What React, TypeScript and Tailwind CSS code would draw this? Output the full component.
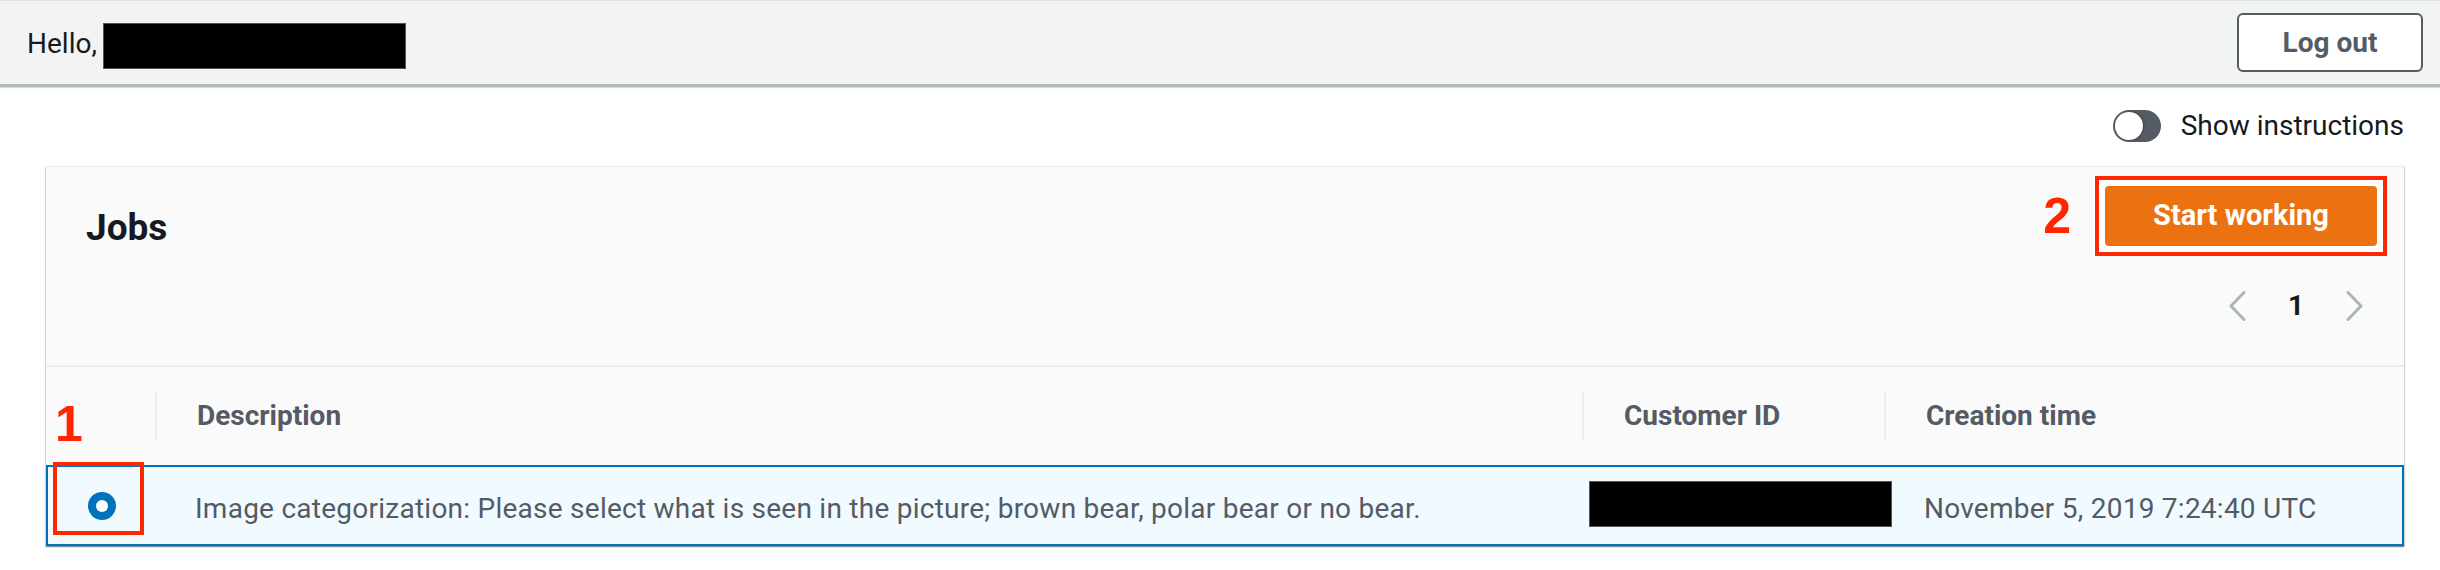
const font = { fontFamily: "Roboto, 'Open Sans', Arial, sans-serif" };
const annot = { fontFamily: "'Liberation Sans', Arial, sans-serif" };

function Toggle() {
  return (
    <div className="flex h-[32px] w-[48px] items-center rounded-full bg-[#545b64] pl-[2px]">
      <div className="h-[28px] w-[28px] rounded-full bg-white shadow-[1px_0_2px_rgba(0,0,0,0.35)]" />
    </div>
  );
}

function Radio() {
  return (
    <div className="flex h-[28px] w-[28px] items-center justify-center rounded-full bg-[#0073bb]">
      <div className="h-[12px] w-[12px] rounded-full bg-white" />
    </div>
  );
}

function Chevron({ dir }: { dir: "left" | "right" }) {
  return (
    <svg width="17" height="30" viewBox="0 0 17 30" fill="none" stroke="#aab7b8" strokeWidth="3" strokeLinecap="round" strokeLinejoin="round">
      <polyline points={dir === "left" ? "15,1.5 2,15 15,28.5" : "2,1.5 15,15 2,28.5"} />
    </svg>
  );
}

function HeadCell({ label }: { label: string }) {
  return (
    <div className="flex items-center">
      <div className="h-[48px] w-[2px] bg-[#eaeded]" />
      <span className="ml-[40px] text-[28px] font-bold text-[#545b64]">{label}</span>
    </div>
  );
}

export default function App() {
  return (
    <div className="min-h-[570px] w-full bg-white" style={font}>
      {/* top bar */}
      <header className="flex h-[87px] items-center justify-between border-t border-b-[3px] border-t-[#dfe2e2] border-b-[#b0babb] bg-[#f2f3f3] pl-[27px] pr-[17px] shadow-[0_1px_1px_rgba(0,28,36,0.15)]">
        <div className="flex items-center">
          <span className="mt-[3px] text-[28px] leading-[34px] text-[#16191f]">Hello,</span>
          <div className="ml-[6px] mt-[6px] h-[46px] w-[303px] border border-[#555] bg-black" />
        </div>
        <button className="h-[59px] w-[186px] rounded-[6px] border-2 border-[#545b64] bg-white text-[28px] font-bold text-[#545b64]">
          Log out
        </button>
      </header>

      <main className="pl-[46px] pr-[36px]">
        <div className="mt-[23px] flex h-[32px] items-center justify-end gap-[20px]">
          <Toggle />
          <span className="text-[28px] leading-[32px] text-[#16191f]">Show instructions</span>
        </div>

        <div className="mt-[24px] border-t border-[#eaeded] bg-[#fafafa] shadow-[0_1px_1px_0_rgba(0,28,36,0.3),1px_1px_1px_0_rgba(0,28,36,0.15),-1px_1px_1px_0_rgba(0,28,36,0.15)]">
          {/* container header */}
          <div className="flex h-[200px] justify-between border-b-2 border-[#eaeded] pl-[40px] pr-[17px] pt-[9px]">
            <h2 className="mt-[30px] text-[37px] font-bold leading-[44px] text-[#16191f]">Jobs</h2>
            <div className="flex flex-col items-end">
              <div className="flex items-center gap-[24px]">
                <span className="text-[50px] font-bold leading-none text-[#ff2600]" style={annot}>
                  2
                </span>
                <div className="border-4 border-[#ff2600] bg-white p-[6px]">
                  <button className="h-[60px] w-[272px] rounded-[4px] bg-[#ec7211] text-[29px] font-bold text-white">
                    Start working
                  </button>
                </div>
              </div>
              <div className="mr-[24px] mt-[35px] flex h-[30px] items-center gap-[42px]">
                <Chevron dir="left" />
                <span className="text-[28px] font-bold leading-[30px] text-[#16191f]">1</span>
                <Chevron dir="right" />
              </div>
            </div>
          </div>

          {/* table header */}
          <div className="grid h-[98px] grid-cols-[109px_1427px_302px_1fr]">
            <div className="flex items-end pb-[16px] pl-[9px]">
              <span className="text-[50px] font-bold leading-none text-[#ff2600]" style={annot}>
                1
              </span>
            </div>
            <HeadCell label="Description" />
            <HeadCell label="Customer ID" />
            <HeadCell label="Creation time" />
          </div>

          {/* selected row */}
          <div className="grid h-[81px] grid-cols-[107px_1427px_302px_1fr] border-2 border-[#0073bb] bg-[#f1faff] text-[28px] tracking-[0.25px] text-[#545b64]">
            <div className="relative flex items-center justify-center">
              <Radio />
              <div className="absolute left-[5px] top-[-5px] h-[73px] w-[91px] border-4 border-[#ff2600]" />
            </div>
            <div className="flex items-center pl-[40px] pt-[6px]">
              Image categorization: Please select what is seen in the picture; brown bear, polar bear or no bear.
            </div>
            <div className="flex items-center pl-[7px]">
              <div className="mb-[4px] h-[46px] w-[303px] shrink-0 border border-[#555] bg-black" />
            </div>
            <div className="flex items-center pl-[40px] pt-[6px]">November 5, 2019 7:24:40 UTC</div>
          </div>
        </div>
      </main>
    </div>
  );
}
